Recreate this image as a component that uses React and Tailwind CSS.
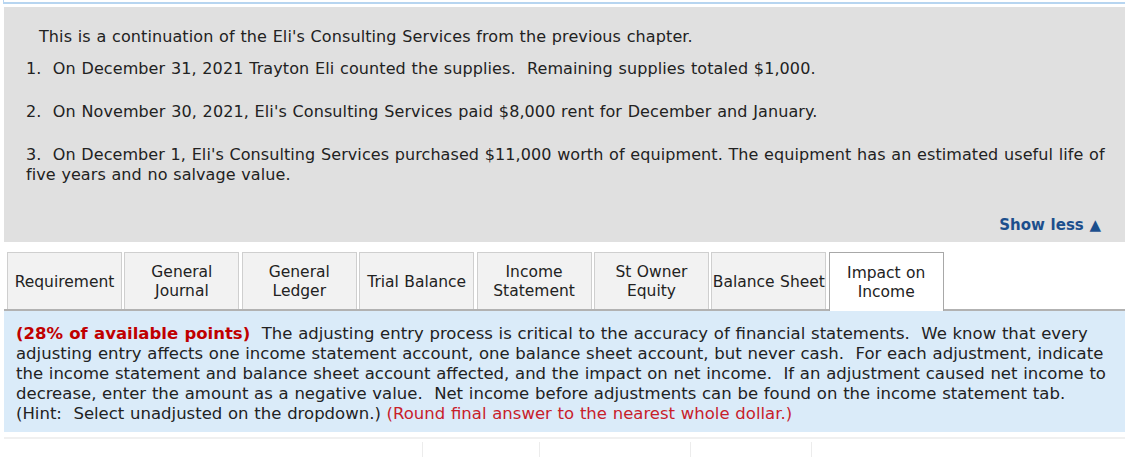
import React from "react";

const tabs = [
  ["Requirement"],
  ["General", "Journal"],
  ["General", "Ledger"],
  ["Trial Balance"],
  ["Income", "Statement"],
  ["St Owner", "Equity"],
  ["Balance Sheet"],
  ["Impact on", "Income"],
];

export default function App() {
  return (
    <div className="w-[1125px] h-[457px] overflow-hidden bg-white text-[16px] leading-[20px] tracking-[0.1px] [word-spacing:0.5px] text-[#222] font-['DejaVu_Sans',Verdana,sans-serif]">
      <div className="h-[4px] ml-[3px] border-l border-b-[2px] border-[#b7d5f0]"></div>
      <div className="mt-[3px] ml-[4px] h-[235px] bg-[#e0e0e0] flex flex-col">
        <div className="pt-[20px] pl-[35px] whitespace-nowrap">
          This is a continuation of the Eli's Consulting Services from the previous chapter.
        </div>
        <div className="pl-[22px] mt-[12px] flex flex-col gap-[23px]">
          <div className="whitespace-pre">1.  On December 31, 2021 Trayton Eli counted the supplies.  Remaining supplies totaled $1,000.</div>
          <div className="whitespace-pre">2.  On November 30, 2021, Eli's Consulting Services paid $8,000 rent for December and January.</div>
          <div className="whitespace-pre tracking-[0.08px]">
            <div>3.  On December 1, Eli's Consulting Services purchased $11,000 worth of equipment. The equipment has an estimated useful life of</div>
            <div>five years and no salvage value.</div>
          </div>
        </div>
        <div className="mt-auto mb-[7px] pr-[24px] flex justify-end font-bold text-[15px] tracking-normal text-[#1c4f8d]">
          <span>Show less ▲</span>
        </div>
      </div>
      <div className="mt-[10px] ml-[4px] border-b-[2px] border-[#b2b2b2] flex pl-[3px] gap-[2.4px] h-[59px] text-[15.5px] tracking-normal">
        {tabs.map((t, i) => {
          const active = i === tabs.length - 1;
          return (
            <div
              key={i}
              className={
                active
                  ? "w-[115px] h-[59px] -mb-[2px] pt-[1px] bg-white border border-b-0 border-[#a8a8a8] flex flex-col items-center justify-center leading-[19px] text-[#222]"
                  : "w-[115px] h-[57px] pt-[2px] bg-[#f2f2f2] border border-b-0 border-[#cfcfcf] flex flex-col items-center justify-center leading-[19px] text-[#222]"
              }
            >
              {t.map((l, j) => (
                <span key={j} className="whitespace-nowrap">{l}</span>
              ))}
            </div>
          );
        })}
      </div>
      <div className="ml-[4px] bg-[#daebf9] pt-[13px] pb-[9px] pl-[12px] h-[121px] whitespace-pre text-[16.5px] tracking-normal">
        <div>
          <span className="font-bold text-[#c00000]">(28% of available points)</span>  The adjusting entry process is critical to the accuracy of financial statements.  We know that every
        </div>
        <div>adjusting entry affects one income statement account, one balance sheet account, but never cash.  For each adjustment, indicate</div>
        <div>the income statement and balance sheet account affected, and the impact on net income.  If an adjustment caused net income to</div>
        <div>decrease, enter the amount as a negative value.  Net income before adjustments can be found on the income statement tab.</div>
        <div>
          (Hint:  Select unadjusted on the dropdown.) <span className="text-[#c8202a]">(Round final answer to the nearest whole dollar.)</span>
        </div>
      </div>
      <div className="mt-[5px] ml-[4px] h-[2px] bg-[#f0f0f0]"></div>
      <div className="relative h-[20px]">
        <div className="absolute top-[3px] bottom-0 left-[422px] w-px bg-[#ececec]"></div>
        <div className="absolute top-[3px] bottom-0 left-[539px] w-px bg-[#ececec]"></div>
        <div className="absolute top-[3px] bottom-0 left-[690px] w-px bg-[#ececec]"></div>
        <div className="absolute top-[3px] bottom-0 left-[811px] w-px bg-[#ececec]"></div>
      </div>
    </div>
  );
}
